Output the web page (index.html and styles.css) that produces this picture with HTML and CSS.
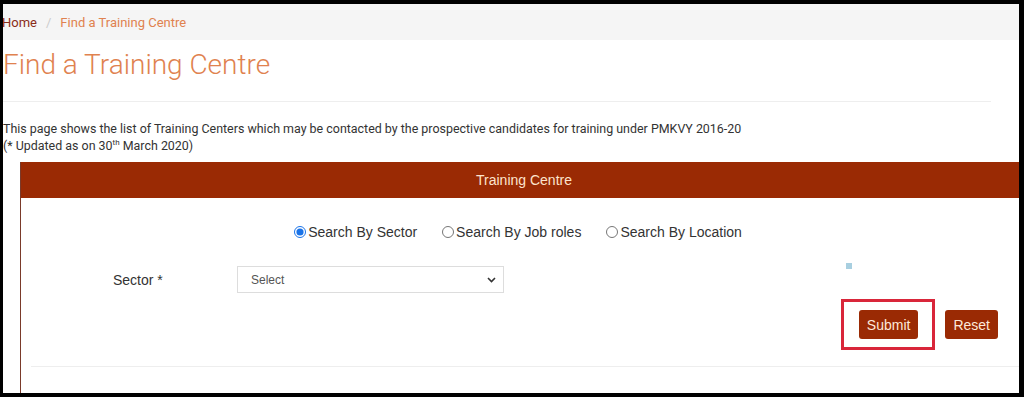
FILE: index.html
```html
<!DOCTYPE html>
<html lang="en">
<head>
<meta charset="utf-8">
<title>Find a Training Centre</title>
<link rel="stylesheet" href="styles.css">
</head>
<body>
<div class="frame">
  <nav class="breadcrumb">
    <a class="crumb-home" href="#">Home</a>
    <span class="crumb-sep">/</span>
    <span class="crumb-current">Find a Training Centre</span>
  </nav>
  <h1 class="page-title">Find a Training Centre</h1>
  <hr class="rule">
  <p class="intro">This page shows the list of Training Centers which may be contacted by the prospective candidates for training under PMKVY 2016-20<br>(* Updated as on 30<sup>th</sup> March 2020)</p>
  <section class="panel">
    <div class="panel-head">Training Centre</div>
    <div class="panel-body">
      <div class="radio-row">
        <label class="radio-item"><input type="radio" name="by" checked> Search By Sector</label>
        <label class="radio-item"><input type="radio" name="by"> Search By Job roles</label>
        <label class="radio-item"><input type="radio" name="by"> Search By Location</label>
      </div>
      <div class="form-row">
        <label class="field-label">Sector *</label>
        <div class="select-box">
          <span>Select</span>
          <svg class="chev" width="9" height="6" viewBox="0 0 9 6"><path d="M1 1 L4.5 4.5 L8 1" fill="none" stroke="#333" stroke-width="1.6"/></svg>
        </div>
        <span class="dot"></span>
      </div>
      <div class="btn-row">
        <span class="highlight"><button class="btn">Submit</button></span>
        <button class="btn">Reset</button>
      </div>
      <div class="panel-foot"></div>
    </div>
  </section>
</div>
</body>
</html>
```
FILE: styles.css
```css
html, body { margin: 0; padding: 0; }
body { background: #000; }
.frame {
  margin: 4px 5px 4px 3px;
  height: 389px;
  background: #fff;
  overflow: hidden;
  font-family: Roboto, "Liberation Sans", sans-serif;
}
.breadcrumb {
  height: 36px;
  background: #f5f5f5;
  display: flex;
  align-items: center;
  font-size: 13px;
  margin-left: -1px;
}
.crumb-home { color: #8a2c18; text-decoration: none; }
.crumb-sep { color: #ccc; padding: 0 9px; }
.crumb-current { color: #e0824f; }
.page-title {
  margin: 8px 0 0 0;
  font-weight: 300;
  font-size: 28px;
  line-height: 34px;
  color: #e0824f;
}
.rule {
  border: 0;
  border-top: 1px solid #eee;
  margin: 19px 28px 0 0;
}
.intro {
  margin: 18px 0 0 0;
  font-size: 12.45px;
  line-height: 17px;
  color: #333;
}
.intro sup { font-size: 8px; line-height: 0; }
.panel {
  margin: 8px -8px 0 17px;
  border-left: 1px solid #7a3a2a;
  height: 300px;
}
.panel-head {
  height: 36px;
  background: #9a2a04;
  color: #fde3cc;
  font-family: "Liberation Sans", Arial, sans-serif;
  font-size: 14px;
  display: flex;
  align-items: center;
  justify-content: center;
}
.panel-body {
  padding-top: 24px;
  font-family: "Liberation Sans", Arial, sans-serif;
  color: #333;
}
.radio-row {
  display: flex;
  justify-content: center;
  gap: 25px;
  font-size: 14px;
  height: 19px;
  align-items: center;
  padding-right: 12px;
}
.radio-item { display: flex; align-items: center; gap: 2px; }
.radio-item input { margin: 0; width: 12px; height: 12px; accent-color: #1a73e8; }
.form-row {
  margin-top: 25px;
  display: grid;
  grid-template-columns: 124px 267px auto;
  padding-left: 92px;
  align-items: center;
}
.field-label { font-size: 14px; }
.select-box {
  height: 25px;
  border: 1px solid #ddd;
  display: flex;
  align-items: center;
  justify-content: space-between;
  padding: 0 7px 0 13px;
  font-size: 12px;
  color: #555;
}
.dot {
  width: 6px; height: 6px;
  background: #a8cfe0;
  margin-left: 342px;
  align-self: start;
  margin-top: -3px;
}
.btn-row {
  margin-top: 17px;
  display: flex;
  justify-content: flex-end;
  align-items: center;
  gap: 27px;
  padding-right: 29px;
}
.highlight { position: relative; display: inline-flex; }
.highlight::after {
  content: "";
  position: absolute;
  left: -18px; top: -11px; right: -17px; bottom: -11px;
  border: 3px solid #d9263a;
}
.btn {
  height: 29px;
  padding: 0 8px;
  border: 0;
  border-radius: 3px;
  background: #9a2a04;
  color: #fde9d9;
  font-family: "Liberation Sans", Arial, sans-serif;
  font-size: 14px;
}
.panel-foot {
  margin: 27px 0 0 10px;
  border-top: 1px solid #eee;
}
```
